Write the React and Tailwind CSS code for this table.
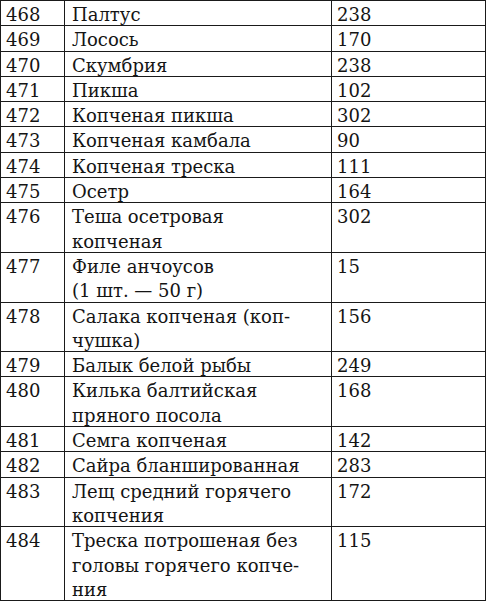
import React from "react";

const rows = [
  { id: "468", name: ["Палтус"], value: "238" },
  { id: "469", name: ["Лосось"], value: "170" },
  { id: "470", name: ["Скумбрия"], value: "238" },
  { id: "471", name: ["Пикша"], value: "102" },
  { id: "472", name: ["Копченая пикша"], value: "302" },
  { id: "473", name: ["Копченая камбала"], value: "90" },
  { id: "474", name: ["Копченая треска"], value: "111" },
  { id: "475", name: ["Осетр"], value: "164" },
  { id: "476", name: ["Теша осетровая", "копченая"], value: "302" },
  { id: "477", name: ["Филе анчоусов", "(1 шт. — 50 г)"], value: "15" },
  { id: "478", name: ["Салака копченая (коп-", "чушка)"], value: "156" },
  { id: "479", name: ["Балык белой рыбы"], value: "249" },
  { id: "480", name: ["Килька балтийская", "пряного посола"], value: "168" },
  { id: "481", name: ["Семга копченая"], value: "142" },
  { id: "482", name: ["Сайра бланшированная"], value: "283" },
  { id: "483", name: ["Лещ средний горячего", "копчения"], value: "172" },
  {
    id: "484",
    name: ["Треска потрошеная без", "головы горячего копче-", "ния"],
    value: "115",
  },
];

const cell = "border border-[#1a1a1a] align-top p-0 pt-[2px]";

const App = () => {
  return (
    <div className="w-[486px] h-[601px] bg-white overflow-hidden">
      <table className="border-collapse w-[485px] table-fixed font-['DejaVu_Serif',serif] text-[18px] leading-[24.3px] text-[#141414]">
        <colgroup>
          <col className="w-[64px]" />
          <col className="w-[267px]" />
          <col className="w-[154px]" />
        </colgroup>
        <tbody>
          {rows.map((row) => (
            <tr key={row.id}>
              <td className={cell + " pl-[5px]"}>
                <div className="-mb-[2px]">{row.id}</div>
              </td>
              <td className={cell + " pl-[7px] whitespace-nowrap"}>
                <div className="-mb-[2px]">
                  {row.name.map((line, i) => (
                    <div key={i}>{line}</div>
                  ))}
                </div>
              </td>
              <td className={cell + " pl-[5px]"}>
                <div className="-mb-[2px]">{row.value}</div>
              </td>
            </tr>
          ))}
        </tbody>
      </table>
    </div>
  );
};

export default App;
